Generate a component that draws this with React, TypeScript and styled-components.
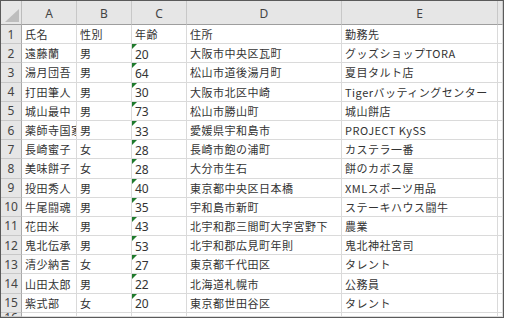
import React from "react";
import styled, { createGlobalStyle } from "styled-components";

const Global = createGlobalStyle`
  html, body { margin: 0; padding: 0; background: #ffffff; }
  body { font-family: "Noto Sans CJK JP", "Noto Sans", sans-serif; }
`;

const Frame = styled.div`
  width: 504px;
  height: 318px;
  box-sizing: border-box;
  border: 1px solid #5a5a5a;
  overflow: hidden;
  background: #fff;
`;

const Sheet = styled.div`
  display: grid;
  grid-template-columns: 21px 55px 55px 55px 155px 156px 1fr;
  grid-template-rows: 24px repeat(15, 19.2px) 1fr;
  height: 100%;
`;

const Corner = styled.div`
  position: relative;
  background: #e6e6e6;
  border-right: 1px solid #bcbcbc;
  border-bottom: 1px solid #9e9e9e;
  box-sizing: border-box;
  &::after {
    content: "";
    position: absolute;
    right: 2px;
    bottom: 2px;
    width: 0;
    height: 0;
    border-left: 14px solid transparent;
    border-bottom: 13px solid #bdbdbd;
  }
`;

const ColHead = styled.div`
  background: #e6e6e6;
  border-right: 1px solid #c8c8c8;
  border-bottom: 1px solid #9e9e9e;
  box-sizing: border-box;
  display: flex;
  align-items: center;
  justify-content: center;
  font-family: "Noto Sans", "Liberation Sans", sans-serif;
  font-size: 12px;
  color: #444;
  padding-top: 1px;
`;

const RowHead = styled.div<{ $partial?: boolean }>`
  background: #e6e6e6;
  border-right: 1px solid #a9a9a9;
  border-bottom: 1px solid #c8c8c8;
  box-sizing: border-box;
  display: flex;
  align-items: ${(p) => (p.$partial ? "flex-start" : "center")};
  justify-content: center;
  font-family: "Noto Sans", "Liberation Sans", sans-serif;
  font-size: 12px;
  line-height: ${(p) => (p.$partial ? "4px" : "normal")};
  padding-top: ${(p) => (p.$partial ? "3px" : "0")};
  color: #444;
  overflow: hidden;
`;

const Cell = styled.div<{ $flag?: boolean }>`
  position: relative;
  border-right: 1px solid #dadada;
  border-bottom: 1px solid #dadada;
  box-sizing: border-box;
  display: flex;
  align-items: center;
  padding-left: 3px;
  font-size: 11px;
  letter-spacing: 0.5px;
  color: #333;
  white-space: nowrap;
  overflow: hidden;
  ${(p) =>
    p.$flag
      ? `&::before {
    content: "";
    position: absolute;
    left: 0;
    top: 0;
    width: 0;
    height: 0;
    border-top: 5px solid #1f7a2c;
    border-right: 5px solid transparent;
  }`
      : ""}
`;

const Num = styled.span`
  font-family: "Noto Sans", "Liberation Sans", sans-serif;
  font-size: 12px;
  letter-spacing: 0;
  padding-top: 2px;
`;

type Row = [string, string, string, string, string];

const rows: Row[] = [
  ["氏名", "性別", "年齢", "住所", "勤務先"],
  ["遠藤蘭", "男", "20", "大阪市中央区瓦町", "グッズショップTORA"],
  ["湯月団吾", "男", "64", "松山市道後湯月町", "夏目タルト店"],
  ["打田筆人", "男", "30", "大阪市北区中崎", "Tigerバッティングセンター"],
  ["城山最中", "男", "73", "松山市勝山町", "城山餅店"],
  ["薬師寺国家", "男", "33", "愛媛県宇和島市", "PROJECT KySS"],
  ["長崎蜜子", "女", "28", "長崎市飽の浦町", "カステラ一番"],
  ["美味餅子", "女", "28", "大分市生石", "餅のカボス屋"],
  ["投田秀人", "男", "40", "東京都中央区日本橋", "XMLスポーツ用品"],
  ["牛尾闘魂", "男", "35", "宇和島市新町", "ステーキハウス闘牛"],
  ["花田米", "男", "43", "北宇和郡三間町大字宮野下", "農業"],
  ["鬼北伝承", "男", "53", "北宇和郡広見町年則", "鬼北神社宮司"],
  ["清少納言", "女", "27", "東京都千代田区", "タレント"],
  ["山田太郎", "男", "22", "北海道札幌市", "公務員"],
  ["紫式部", "女", "20", "東京都世田谷区", "タレント"],
];

const cols = ["A", "B", "C", "D", "E", ""];

export default function App() {
  return (
    <>
      <Global />
      <Frame>
        <Sheet>
          <Corner />
          {cols.map((c, i) => (
            <ColHead key={i}>{c}</ColHead>
          ))}
          {rows.map((r, ri) => (
            <React.Fragment key={ri}>
              <RowHead>{ri + 1}</RowHead>
              <Cell>{r[0]}</Cell>
              <Cell>{r[1]}</Cell>
              <Cell $flag={ri > 0}>{ri > 0 ? <Num>{r[2]}</Num> : r[2]}</Cell>
              <Cell>{r[3]}</Cell>
              <Cell>{r[4]}</Cell>
              <Cell />
            </React.Fragment>
          ))}
          <RowHead $partial>16</RowHead>
          <Cell />
          <Cell />
          <Cell />
          <Cell />
          <Cell />
          <Cell />
        </Sheet>
      </Frame>
    </>
  );
}
